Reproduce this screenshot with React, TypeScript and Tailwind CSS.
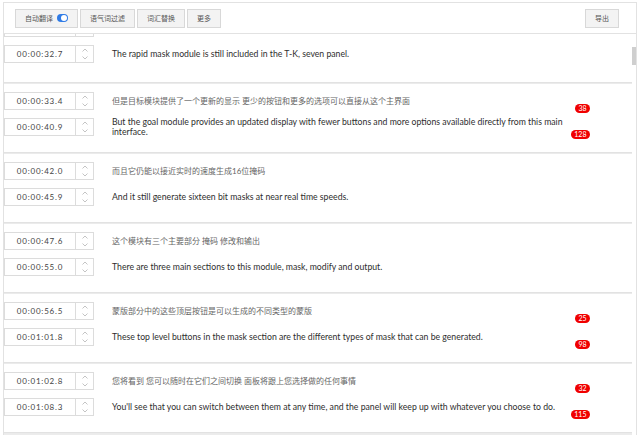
import React from "react";

type Line = { time: string; text: string; badge?: number };
type Group = { zh: Line; en: Line };

const groups: Group[] = [
  {
    zh: { time: "", text: "" },
    en: { time: "00:00:32.7", text: "The rapid mask module is still included in the T-K, seven panel." },
  },
  {
    zh: { time: "00:00:33.4", text: "但是目标模块提供了一个更新的显示 更少的按钮和更多的选项可以直接从这个主界面", badge: 38 },
    en: {
      time: "00:00:40.9",
      text: "But the goal module provides an updated display with fewer buttons and more options available directly from this main interface.",
      badge: 128,
    },
  },
  {
    zh: { time: "00:00:42.0", text: "而且它仍能以接近实时的速度生成16位掩码" },
    en: { time: "00:00:45.9", text: "And it still generate sixteen bit masks at near real time speeds." },
  },
  {
    zh: { time: "00:00:47.6", text: "这个模块有三个主要部分 掩码 修改和输出" },
    en: { time: "00:00:55.0", text: "There are three main sections to this module, mask, modify and output." },
  },
  {
    zh: { time: "00:00:56.5", text: "蒙版部分中的这些顶层按钮是可以生成的不同类型的蒙版", badge: 25 },
    en: { time: "00:01:01.8", text: "These top level buttons in the mask section are the different types of mask that can be generated.", badge: 98 },
  },
  {
    zh: { time: "00:01:02.8", text: "您将看到 您可以随时在它们之间切换 面板将跟上您选择做的任何事情", badge: 32 },
    en: {
      time: "00:01:08.3",
      text: "You'll see that you can switch between them at any time, and the panel will keep up with whatever you choose to do.",
      badge: 115,
    },
  },
];

function TimeBox({ time }: { time: string }) {
  return (
    <div className="flex h-[18px] shrink-0">
      <div className="flex w-[72px] items-center justify-center border border-[#dcdcdc] bg-white text-[8px] tracking-[0.8px] text-[#444]">
        {time}
      </div>
      <div className="flex w-[18px] flex-col items-center justify-between border border-l-0 border-[#dcdcdc] bg-white py-[2px]">
        <svg width="6" height="4" viewBox="0 0 6 4" fill="none" stroke="#b5b5b5" strokeWidth="0.8">
          <path d="M0.5 3.5 3 1 5.5 3.5" />
        </svg>
        <svg width="6" height="4" viewBox="0 0 6 4" fill="none" stroke="#b5b5b5" strokeWidth="0.8">
          <path d="M0.5 0.5 3 3 5.5 0.5" />
        </svg>
      </div>
    </div>
  );
}

function Row({ line, zh }: { line: Line; zh?: boolean }) {
  return (
    <div className="flex h-[18px] items-center">
      <TimeBox time={line.time} />
      <div
        className={
          zh
            ? "ml-[18px] w-[458px] text-[8px] leading-[10px] text-[#666]"
            : "ml-[18px] w-[458px] text-[8.7px] leading-[10px] text-[#2e2e2e]"
        }
      >
        {line.text}
      </div>
      <div className="flex w-[20px] justify-end self-start">
        {line.badge !== undefined && (
          <span className="mt-[12px] flex h-[9px] items-center rounded-full bg-[#f00000] px-[3.5px] text-[7px] leading-none text-white">
            {line.badge}
          </span>
        )}
      </div>
    </div>
  );
}

function ToolButton({ children }: { children: React.ReactNode }) {
  return (
    <button className="flex h-[19px] items-center gap-[4px] border border-[#d8d8d8] bg-[#f3f3f3] px-[9px] text-[7px] text-[#555]">
      {children}
    </button>
  );
}

export default function App() {
  return (
    <div
      className="h-[435px] w-[640px] overflow-hidden bg-white"
      style={{ fontFamily: 'Lato, "Noto Sans CJK SC", sans-serif' }}
    >
      <div className="ml-[3px] mt-[2px] flex h-[433px] w-[634px] flex-col border-l border-r border-t border-[#e2e2e2]">
        <div className="flex h-[31px] shrink-0 items-center border-b border-[#e2e2e2] pl-[11px] pr-[17px]">
          <div className="flex gap-[2px]">
            <ToolButton>
              自动翻译
              <span className="flex h-[8px] w-[11px] items-center justify-end rounded-full bg-[#2f7be6] px-[1px]">
                <span className="h-[6px] w-[6px] rounded-full bg-white" />
              </span>
            </ToolButton>
            <ToolButton>语气词过滤</ToolButton>
            <ToolButton>词汇替换</ToolButton>
            <ToolButton>更多</ToolButton>
          </div>
          <div className="ml-auto">
            <ToolButton>导出</ToolButton>
          </div>
        </div>
        <div className="flex min-h-0 flex-1">
          <div className="min-w-0 flex-1 overflow-hidden bg-[#ececec]">
            <div className="mt-[-23px] flex flex-col gap-[2px]">
              {groups.map((g, i) => (
                <div
                  key={g.en.time}
                  className={
                    i === 0
                      ? "flex flex-col gap-[8px] bg-white pb-[19px] pt-[8px] shadow-[0_1px_1px_rgba(0,0,0,0.04)]"
                      : "flex flex-col gap-[8px] bg-white pb-[16px] pt-[8px] shadow-[0_1px_1px_rgba(0,0,0,0.04)]"
                  }
                >
                  <Row line={g.zh} zh />
                  <Row line={g.en} />
                </div>
              ))}
            </div>
          </div>
          <div className="w-[4px] shrink-0 bg-white pt-[13px]">
            <div className="h-[18px] w-[4px] bg-[#cfcfcf]" />
          </div>
        </div>
      </div>
    </div>
  );
}
